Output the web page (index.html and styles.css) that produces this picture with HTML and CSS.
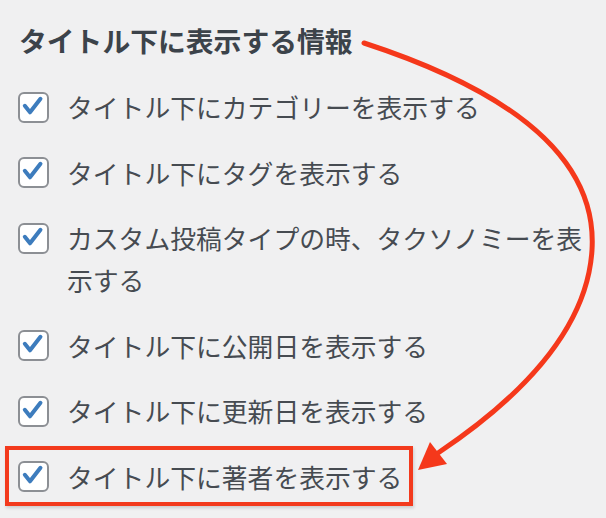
FILE: index.html
```html
<!DOCTYPE html>
<html lang="ja">
<head>
<meta charset="utf-8">
<link rel="stylesheet" href="styles.css">
</head>
<body>
<div class="page">
  <h2 class="title">タイトル下に表示する情報</h2>
  <ul class="options">
    <li class="opt"><span class="cb"><svg viewBox="0 0 31 31"><path d="M7.5 15.5 L13.5 23 L25.5 7.5" /></svg></span><span class="lbl">タイトル下にカテゴリーを表示する</span></li>
    <li class="opt"><span class="cb"><svg viewBox="0 0 31 31"><path d="M7.5 15.5 L13.5 23 L25.5 7.5" /></svg></span><span class="lbl">タイトル下にタグを表示する</span></li>
    <li class="opt"><span class="cb"><svg viewBox="0 0 31 31"><path d="M7.5 15.5 L13.5 23 L25.5 7.5" /></svg></span><span class="lbl">カスタム投稿タイプの時、タクソノミーを表示する</span></li>
    <li class="opt"><span class="cb"><svg viewBox="0 0 31 31"><path d="M7.5 15.5 L13.5 23 L25.5 7.5" /></svg></span><span class="lbl">タイトル下に公開日を表示する</span></li>
    <li class="opt"><span class="cb"><svg viewBox="0 0 31 31"><path d="M7.5 15.5 L13.5 23 L25.5 7.5" /></svg></span><span class="lbl">タイトル下に更新日を表示する</span></li>
    <li class="opt highlight"><span class="cb"><svg viewBox="0 0 31 31"><path d="M7.5 15.5 L13.5 23 L25.5 7.5" /></svg></span><span class="lbl">タイトル下に著者を表示する</span></li>
  </ul>
  <svg class="arrow" viewBox="0 0 606 518" width="606" height="518">
    <path class="arrow-line" d="M364 43 Q600 120 592 250 Q585.6 354 438 453" />
    <polygon class="arrow-head" points="430,442 447,464 418,470" />
  </svg>
</div>
</body>
</html>
```

FILE: styles.css
```css
html, body {
  margin: 0;
  padding: 0;
  background: #f0f0f1;
}
body {
  width: 606px;
  height: 518px;
  overflow: hidden;
  font-family: "Noto Sans CJK JP", "Noto Sans", sans-serif;
  color: #3c434a;
}
.page {
  position: relative;
  width: 606px;
  height: 518px;
  padding: 20px 6px 0 18px;
  box-sizing: border-box;
}
.title {
  margin: 0 0 0 1px;
  font-size: 27.8px;
  line-height: 40px;
  font-weight: 700;
  color: #3c434a;
}
.options {
  list-style: none;
  margin: 26px 0 0 0;
  padding: 0;
  display: flex;
  flex-direction: column;
  align-items: flex-start;
  gap: 23.5px;
}
.opt {
  position: relative;
  display: flex;
  align-items: flex-start;
  gap: 18px;
}
.cb {
  flex: none;
  width: 31px;
  height: 31px;
  margin-top: 5.5px;
  box-sizing: border-box;
  border: 2px solid #8c8f94;
  border-radius: 6px;
  background: #fff;
  display: flex;
}
.cb svg {
  width: 27px;
  height: 27px;
  overflow: visible;
}
.cb path {
  fill: none;
  stroke: #3d7cbd;
  stroke-width: 4.6;
  stroke-linecap: round;
  stroke-linejoin: round;
  transform: translate(-2px, -2px);
}
.lbl {
  font-size: 25.8px;
  line-height: 42px;
  color: #464b51;
  max-width: 533px;
}
.highlight::after {
  content: "";
  position: absolute;
  left: -13px;
  top: -10px;
  right: -11px;
  bottom: -8px;
  border: 4px solid #f33a1d;
  box-shadow: 1px 2px 3px rgba(0,0,0,0.15);
}
.arrow {
  position: absolute;
  left: 0;
  top: 0;
  pointer-events: none;
}
.arrow-line {
  fill: none;
  stroke: #f5381b;
  stroke-width: 5;
  stroke-linecap: round;
}
.arrow-head {
  fill: #f5381b;
}
```
